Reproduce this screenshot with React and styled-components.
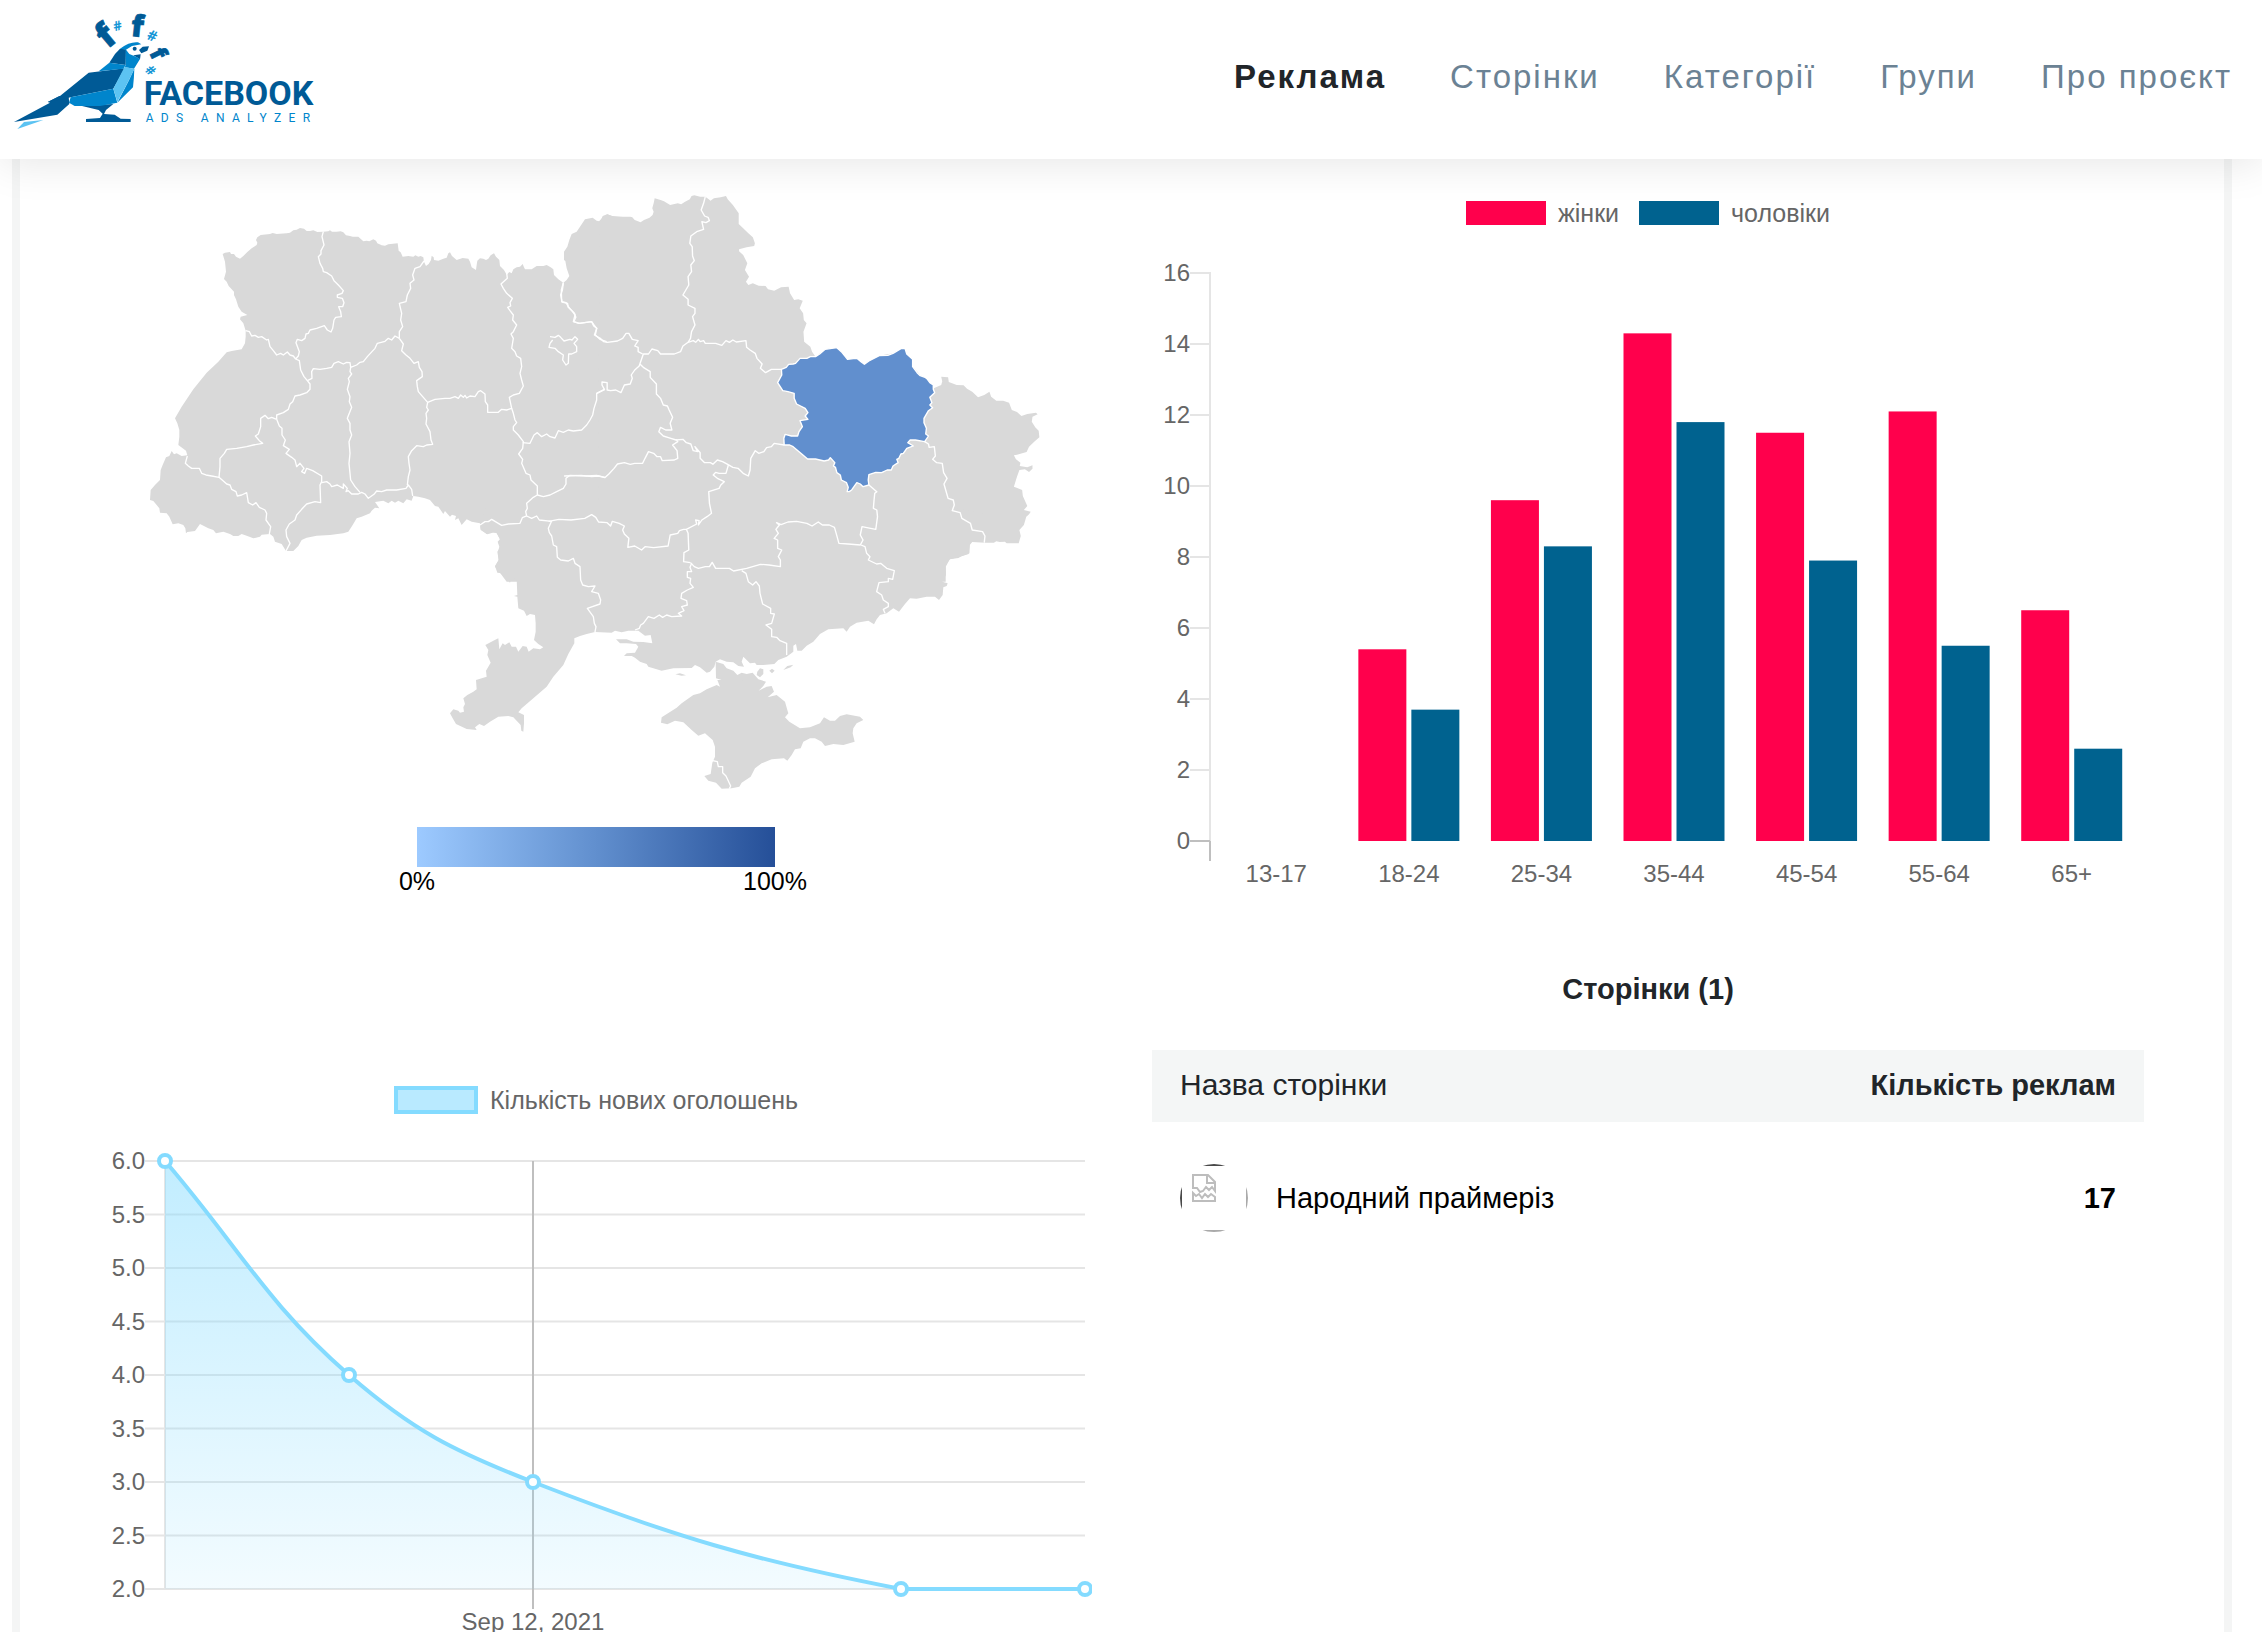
import React from "react";
import styled, { createGlobalStyle } from "styled-components";

const navItems = [
  { label: "Реклама", active: true },
  { label: "Сторінки" },
  { label: "Категорії" },
  { label: "Групи" },
  { label: "Про проєкт" },
];

const pages = [{ name: "Народний праймеріз", count: 17 }];

const ages = [
  { label: "13-17", women: 0, men: 0 },
  { label: "18-24", women: 5.4, men: 3.7 },
  { label: "25-34", women: 9.6, men: 8.3 },
  { label: "35-44", women: 14.3, men: 11.8 },
  { label: "45-54", women: 11.5, men: 7.9 },
  { label: "55-64", women: 12.1, men: 5.5 },
  { label: "65+", women: 6.5, men: 2.6 },
];

const newAds = [
  { day: 0, value: 6 },
  { day: 1, value: 4 },
  { day: 2, value: 3 },
  { day: 4, value: 2 },
  { day: 5, value: 2 },
];

// Outlines are kept per map sheet, each sheet has its own origin and scale
const sheets = [
  {
    id: "west",
    transform: "translate(30 0) scale(0.33333)",
    areas: [
      "278,222 285,218 300,216 303,222 312,222 318,230 330,236 340,228 352,216 365,205 380,195 382,188 378,180 382,172 392,165 420,162 428,159 440,162 470,160 480,158 490,151 500,149 510,144 522,146 530,153 540,153 550,151 562,156 580,155 595,154 600,151 606,155 620,155 632,154 640,157 648,166 660,168 668,170 685,170 700,184 710,182 718,184 730,178 738,182 742,190 755,196 765,197 775,193 803,190 806,212 812,217 818,230 835,228 850,230 856,226 865,230 872,228 880,232 882,245 888,258 896,252 900,245 903,240 905,227 911,232 912,240 925,242 940,236 950,233 955,220 960,217 966,228 980,240 998,234 1015,236 1020,245 1025,262 1038,270 1040,255 1042,242 1050,235 1060,236 1068,240 1075,236 1082,226 1092,220 1098,230 1106,238 1108,240 1110,258 1122,270 1130,284 1138,276 1145,280 1150,268 1160,262 1170,260 1178,252 1182,262 1185,268 1205,268 1220,258 1240,258 1250,255 1262,262 1270,268 1272,285 1285,298 1300,308 1310,300 1318,288 1310,265 1306,243 1302,240 1302,215 1312,200 1318,180 1325,162 1340,155 1350,140 1365,118 1388,113 1400,122 1408,124 1418,112 1432,103 1455,112 1455,1205 1130,1205 1115,1185 1095,1160 1106,1140 1104,1115 1108,1100 1103,1085 1110,1078 1100,1060 1090,1056 1070,1062 1052,1048 1050,1030 1025,1025 1010,1018 995,1035 985,1015 975,1020 978,1008 966,1004 960,1010 945,993 940,1002 925,980 915,978 900,960 885,955 865,950 850,948 845,962 830,958 820,970 805,962 795,968 785,962 775,970 760,962 735,966 748,985 735,983 725,992 720,1000 695,1010 680,1015 668,1035 655,1055 640,1060 600,1065 560,1067 530,1073 515,1080 505,1098 490,1113 468,1113 455,1092 435,1085 430,1070 420,1062 395,1064 390,1070 370,1075 350,1067 335,1062 325,1068 310,1068 300,1062 280,1055 258,1060 250,1050 235,1045 210,1032 195,1053 172,1056 168,1060 166,1045 160,1035 145,1030 128,1033 118,1010 110,1000 90,998 88,985 80,975 70,963 60,960 62,930 75,915 90,900 92,870 98,855 108,832 118,828 125,813 132,823 140,820 155,828 172,826 168,812 145,795 148,770 148,750 142,730 135,715 155,680 190,628 230,578 265,545 290,517 305,513 335,508 345,490 347,470 347,452 340,430 330,418 332,410 352,405 335,395 325,380 318,358 312,345 312,335 296,318 290,305 282,297 288,275 285,245",
    ],
    borders: [
      "580,155 576,170 582,195 573,212 573,222 565,230 570,250 578,265 580,275 590,278 605,288 612,302 625,315 640,332 636,340 622,345 622,352 637,355 642,368 638,380 626,380 632,395 634,410 617,412 612,420 608,445 603,456 592,450 583,437 560,445 540,450 535,460 528,462 525,475 515,482 502,478 498,488 508,515 505,528 497,537",
      "347,452 358,455 365,468 375,466 385,472 395,470 410,480 415,478 420,500 430,512 440,525 452,520 460,525 472,516 480,525 490,528 497,537 508,542 512,570 522,590 532,602 540,612 540,628 530,638 510,645 495,648 488,665 480,672 475,688 460,698 440,705 440,718",
      "532,602 546,595 545,575 550,566 570,568 590,565 605,562 612,550 625,545 640,552 650,547 660,548 662,562 680,555 690,547 700,545 712,530 735,505 742,490 765,484 775,475 785,480 795,468 808,475",
      "808,475 808,455 818,440 812,420 815,400 808,370 828,365 832,345 842,325 840,310 852,300 848,285 855,265 870,260 882,243",
      "808,475 820,492 815,512 828,525 840,535 852,550 865,545 868,562 876,575 877,590 860,602 862,620 865,635 878,650 893,667 915,658 945,655 960,655 975,650 985,655 992,645 1000,652 1005,646 1010,654 1020,648 1035,650 1045,635 1052,632 1065,642 1066,665 1073,675 1073,697 1105,697 1115,688 1130,690 1145,685",
      "1130,278 1132,295 1113,312 1120,325 1130,340 1147,355 1140,368 1142,378 1133,382 1140,392 1150,405 1148,420 1160,435 1150,455 1143,462 1150,475 1145,505 1155,515 1160,528 1172,535 1175,560 1170,580 1175,600 1180,618 1168,640 1150,645 1138,652 1145,685 1150,700 1155,720 1160,728 1150,740 1150,750 1165,765 1180,785 1178,805 1166,822 1178,838 1175,850 1188,880 1200,885 1203,900 1222,918 1222,945 1210,952 1190,970 1192,985 1187,995 1190,1008",
      "440,718 425,712 415,716 405,706 392,715 392,740 385,762 376,768 388,782 398,790 370,795 350,800 320,805 290,808 283,820 270,835 270,860 267,892",
      "172,828 166,850 175,858 185,865 208,865 215,880 228,885 245,888 267,892 280,903 290,912 300,915 305,928 318,935 322,948 335,945 350,938 355,968 368,975 378,968 388,982 405,990 410,1000 408,1020 422,1040 418,1062",
      "440,718 448,738 456,745 456,765 466,780 460,797 478,808 468,820 485,832 495,840 500,860 510,850 522,865 515,875 524,880 530,865 548,872 575,888 575,905 570,915 572,968 555,965 530,972 515,988 500,1005 495,1020 478,1032 468,1050 470,1070 480,1090 468,1113",
      "575,908 590,905 600,912 605,920 622,915 640,925 640,912 652,925 648,935 655,932 665,942 685,942 695,937 705,942 715,955 732,943 740,933 755,935 770,930 800,930 828,925 835,915 845,928 848,948",
      "662,562 660,575 665,582 655,595 658,605 652,628 660,650 658,665 665,682 652,715 660,730 660,750 665,765 657,785 660,820 657,850 662,900 675,920 690,937",
      "893,667 890,682 895,690 888,700 890,715 888,732 900,755 903,780 908,793 890,795 880,800 860,797 845,812 835,830 837,850 840,870 835,890 832,915",
      "1178,788 1200,790 1212,765 1222,758 1235,770 1250,762 1260,770 1275,774 1285,752 1300,757 1315,750 1330,753 1355,750 1370,735 1380,720 1388,705 1392,685 1400,660 1400,640 1425,628",
      "1222,945 1240,950 1260,945 1280,935 1300,925 1308,912 1308,895 1320,886 1370,888 1400,886 1425,892",
      "1050,1035 1065,1025 1075,1025 1085,1018 1100,1027 1115,1036 1135,1032 1170,1030 1177,1013 1190,1008 1205,1015 1220,1008 1228,1020 1265,1024",
      "1260,470 1275,472 1285,466 1292,472 1302,483 1320,478 1326,480 1335,470 1343,478 1332,490 1340,500 1340,515 1325,522 1316,522 1315,550 1308,555 1298,540 1300,525 1285,515 1275,505 1257,502 1260,490 1268,480",
      "1300,308 1294,330 1295,365 1308,368 1315,380 1328,395 1335,405 1330,425 1350,430 1385,425 1392,435 1400,445 1396,465 1410,478 1430,485",
    ],
  },
  {
    id: "east",
    transform: "translate(440 0) scale(0.34439 0.33333)",
    areas: [
      "172,124 178,118 182,108 195,103 210,108 240,110 262,110 268,112 275,120 292,127 302,120 318,113 327,105 330,95 326,85 330,70 333,55 350,60 360,64 378,75 400,70 410,73 420,66 435,58 440,48 448,46 465,50 480,50 490,58 495,62 505,55 525,52 540,48 545,58 560,75 577,100 577,132 590,145 605,160 618,172 624,190 622,198 600,202 578,208 578,214 590,225 602,250 595,270 607,290 598,305 605,315 618,310 635,317 655,318 662,328 680,332 700,322 722,320 726,340 738,360 750,358 763,362 754,385 764,400 766,420 774,430 765,455 767,485 785,500 790,515 800,530 828,508 862,503 893,538 942,553 985,527 1025,520 1048,506 1060,506 1065,522 1082,540 1083,560 1104,585 1125,598 1143,625 1165,615 1168,604 1165,590 1185,592 1187,606 1210,615 1230,616 1240,626 1255,635 1272,652 1290,645 1305,635 1310,650 1325,662 1345,662 1362,668 1370,690 1385,696 1398,708 1415,702 1440,698 1445,703 1430,710 1428,725 1438,742 1448,752 1450,772 1435,785 1420,800 1413,816 1385,824 1376,826 1382,838 1395,848 1393,858 1415,862 1430,856 1430,866 1420,876 1408,868 1392,870 1385,890 1376,920 1400,930 1402,948 1415,978 1405,990 1425,995 1420,1003 1412,1010 1405,1035 1392,1050 1396,1068 1390,1090 1355,1090 1350,1085 1335,1086 1325,1084 1318,1088 1292,1088 1255,1086 1248,1095 1247,1120 1225,1128 1215,1134 1190,1138 1178,1160 1178,1205 170,1205",
    ],
    accent:
      "701,568 715,562 722,553 735,552 742,550 755,535 775,535 785,530 800,530 812,522 828,508 862,503 875,515 893,538 910,536 920,535 932,545 942,553 955,543 985,527 1010,526 1025,520 1048,506 1060,506 1065,522 1082,538 1082,560 1095,578 1104,587 1118,592 1125,598 1132,608 1142,615 1142,628 1146,638 1132,652 1138,668 1132,675 1140,683 1128,692 1115,715 1115,728 1122,745 1120,762 1128,768 1117,785 1090,780 1075,780 1068,788 1084,798 1065,805 1055,820 1048,822 1042,835 1036,838 1040,848 1025,858 1020,870 1008,870 992,878 975,877 955,884 953,900 955,915 938,920 930,912 920,908 905,930 898,935 892,935 895,922 890,908 875,900 872,885 862,878 858,862 852,858 856,848 843,833 838,840 825,843 800,837 777,837 760,822 735,800 725,795 709,795 708,775 712,763 730,768 748,768 752,755 762,740 755,722 778,718 770,708 778,698 770,685 745,672 738,655 738,640 720,635 705,632 690,608 702,585",
    borders: [
      "480,50 475,70 468,90 478,108 488,112 492,122 482,128 470,125 475,148 455,155 438,168 435,190 442,200 443,228 448,242 438,255 440,275 430,290 432,315 415,345 430,358 430,375 450,385 450,400 443,410 450,435 440,455 437,475 430,487",
      "430,487 445,482 452,487 460,478 465,485 475,482 480,490 510,490 528,496 540,482 550,487 560,480 570,486 598,482 600,502 610,510 625,520 630,535 645,552 640,565 655,578 672,568 701,568",
      "430,487 415,498 408,515 390,522 350,522 342,512 325,507 315,522 300,522 290,552 300,562 320,575 320,592 338,612 338,642 350,655 358,675 370,678 375,690 385,712 378,730 383,750 365,750 350,742 345,755 358,768 380,775 395,780 415,778 425,788 438,792 445,812 458,815 450,800 465,818 465,835 478,848 495,848 502,853 515,840 530,845 545,853 560,862 575,865 590,880 605,888 610,870 612,835 625,812 635,820 650,815 658,803 672,800 680,790 709,795",
      "68,308 65,330 60,345 64,366 80,370 82,382 100,400 104,412 98,425 112,430 150,425 156,438 165,445 158,465 175,475 185,485 195,487 225,483 240,475 250,460 258,460 268,478 285,482 275,498 285,502 285,515 298,522",
      "187,628 180,615 180,606 195,608 195,630 205,632 220,630 235,638 245,615 262,612 268,595 265,585 275,570 288,558 290,552",
      "165,640 187,628",
      "70,888 120,886 150,890 170,888 188,893 200,882 215,865 225,852 245,848 262,853 275,850 298,850 305,835 315,815 330,820 340,830 350,830 355,842 390,840 400,835 398,812 385,795 400,785 395,778",
      "547,855 540,880 520,880 510,877 503,885 515,895 535,905 525,915 520,925 490,935 492,970 498,1000 485,1010 470,1020 460,1035 462,1022 452,1020 455,1032 425,1048 430,1060 432,1110 418,1118 417,1145 437,1148",
      "25,1024 55,1018 90,1020 130,1015 150,1004 162,1012 170,1026 195,1028 205,1038 210,1024 230,1030 245,1038 240,1050 245,1062 258,1075 255,1102 275,1098 295,1110 305,1100 330,1103 372,1098 378,1065 400,1060 405,1052 417,1048 425,1048",
      "1117,785 1128,792 1130,802 1145,800 1148,828 1140,838 1152,848 1168,850 1172,878 1182,895 1173,912 1178,930 1185,955 1200,960 1203,975 1197,992 1220,998 1225,1015 1250,1030 1255,1050 1285,1055 1292,1068 1290,1088",
      "437,1148 448,1160 460,1165 480,1160 492,1160 500,1147 510,1165 550,1165 562,1173 600,1165 640,1153 665,1155 698,1160 698,1140 692,1130 702,1110 690,1105 690,1080 680,1075 692,1060 685,1048 695,1035 687,1028 700,1034 720,1026 745,1024 775,1030 790,1038 808,1026 820,1035 840,1035 855,1042 860,1060 868,1090 895,1092 930,1095 938,1080 930,1065 935,1040 960,1045 975,1048 980,1010 978,990 968,985 970,960 972,940 978,935 955,915",
    ],
  },
  {
    id: "south",
    transform: "translate(280 300) scale(0.33333)",
    areas: [
      "320,80 1697,80 1810,100 1810,185 1770,185 1766,222 1735,232 1710,237 1697,255 1698,285 1687,305 1703,310 1700,318 1690,322 1688,345 1677,360 1665,350 1640,350 1610,356 1590,355 1575,372 1557,395 1540,385 1520,400 1500,405 1490,418 1482,433 1465,422 1430,428 1410,440 1400,455 1390,445 1345,448 1320,462 1300,485 1280,497 1265,512 1252,512 1248,492 1240,497 1240,515 1220,530 1195,540 1183,552 1150,555 1130,555 1125,548 1110,550 1090,530 1085,545 1092,560 1075,558 1060,547 1040,545 1020,538 1007,545 1003,560 990,575 980,578 960,562 945,555 935,564 880,565 845,572 805,560 800,552 780,545 765,533 755,528 732,528 740,520 765,518 775,500 768,492 740,490 720,490 708,478 740,478 760,485 790,486 817,490 812,465 795,467 775,452 745,452 725,457 705,452 695,458 645,456 620,462 600,468 583,475 583,490 565,522 550,555 520,590 500,620 460,655 425,685 415,697 432,705 432,730 430,755 424,752 422,735 400,712 385,708 355,710 330,725 312,738 298,732 285,742 290,750 260,747 228,732 218,715 210,700 220,688 235,692 240,698 252,695 250,682 255,672 250,655 262,645 280,635 290,628 288,600 320,590 318,572 332,548 322,525 325,510 316,495 340,482 355,475 358,508 368,490 375,495 388,487 395,500 408,500 415,515 428,498 440,500 446,515 460,505 480,508 490,502 475,492 462,480 467,455 467,430 465,405 450,402 440,408 432,392 415,385 412,350 402,348 412,345 410,298 395,295 390,308 375,290 365,280 352,278 345,258 356,240 352,215 362,200 355,188 360,178 350,158 338,158 322,163 302,150 300,130",
      "1007,545 1030,552 1040,565 1060,572 1072,585 1085,578 1100,582 1118,578 1135,598 1158,605 1150,618 1136,632 1160,620 1175,618 1182,635 1163,652 1190,645 1215,665 1222,690 1225,700 1215,712 1228,725 1260,745 1290,742 1320,730 1332,712 1350,722 1365,722 1380,708 1400,703 1440,710 1450,720 1430,730 1420,745 1418,760 1424,785 1390,795 1360,792 1335,798 1325,785 1305,775 1290,775 1270,785 1262,805 1245,808 1235,825 1222,842 1212,835 1175,838 1145,850 1125,865 1112,890 1085,908 1078,920 1055,925 1025,926 1008,908 985,902 973,888 992,882 997,848 1005,830 1005,800 998,780 975,760 955,767 935,750 910,727 885,722 862,733 843,728 845,712 890,683 905,670 940,645 960,640 980,628 1010,615 1020,620 1012,600 1025,600 1008,595",
      "1132,575 1140,565 1150,568 1150,582 1140,592 1130,585",
      "1168,572 1176,566 1184,572 1176,580",
      "1210,570 1222,558 1240,554 1232,562",
      "886,583 900,580 918,586 905,587",
      "1085,580 1092,595 1085,602 1078,598",
    ],
    borders: [
      "515,123 505,145 508,158 515,168 520,195 530,200 532,232 542,240 565,243 580,235 585,250 600,260 602,300 608,315 625,320 645,318 635,335 655,340 662,360 660,372 622,385 640,410 643,430 648,440 645,456",
      "935,250 930,262 935,275 922,275 922,292 932,295 930,310 940,322 922,330 905,340 903,355 920,362 922,375 905,380 912,392 895,400 905,408 875,410 860,405 848,412 838,405 822,415 805,410 790,430 782,435 778,445 765,450",
      "1085,272 1098,280 1105,305 1118,315 1128,305 1138,318 1140,340 1148,372 1172,385 1172,400 1183,402 1175,430 1158,435 1175,448 1175,470 1190,472 1200,482 1220,490 1220,525",
      "1443,195 1455,200 1460,220 1470,230 1465,240 1490,252 1502,250 1520,265 1543,272 1538,298 1525,295 1525,305 1497,308 1490,335 1505,345 1510,360 1525,370 1525,380 1510,388 1515,400",
      "998,842 1012,845 1015,860 1028,860 1028,878 1038,888 1052,918 1048,926",
    ],
  },
];

const MEN = "#00628f";
const WOMEN = "#ff004c";
const LINE = "#84dbff";

function Logo() {
  return (
    <svg width="304" height="120" viewBox="36 30 912 360" role="img" aria-label="Facebook Ads Analyzer">
      <g fill="#005a96">
        <polygon points="206,290 208,312 172,344 42,366 150,308 143,306 178,288" />
        <polygon points="266,218 374,205 340,266 212,292 165,302 143,306 180,288" />
        <polygon points="360,146 378,148 377,195 328,188 345,162" />
        <path d="M246 318L340 312L318 330L312 342L344 344L362 356L392 357V366H258V357L300 354L308 341L296 330Z" />
        <polygon points="417,150 428,140 447,139 442,152 424,160" />
        <polygon points="400,166 422,163 420,178" />
        <circle cx="404" cy="146" r="6" />
      </g>
      <g fill="#0085cc">
        <polygon points="328,188 377,195 370,206 296,214" />
        <path d="M377 148L388 162L408 170L420 177L402 206L374 202L377 195Z" />
        <path d="M360 146Q390 124 414 127L424 133L396 138L378 149Z" />
        <polygon points="212,292 340,266 352,308 300,318 224,318 207,308" />
        <path d="M403 206Q402 236 399 262L352 308L386 242Z" />
      </g>
      <g fill="#5cc3f2">
        <polygon points="374,200 403,207 386,242 352,306 340,266" />
        <polygon points="72,366 130,360 52,387" />
      </g>
      <FaceMark fontSize="104" transform="translate(323 148) rotate(-40)">f</FaceMark>
      <FaceMark fontSize="90" transform="translate(391 108) rotate(6)">f</FaceMark>
      <FaceMark fontSize="70" transform="translate(447 158) rotate(64)">f</FaceMark>
      <HashMark fontSize="40" transform="translate(343 94) rotate(-12)">#</HashMark>
      <HashMark fontSize="44" transform="translate(438 116) rotate(22)">#</HashMark>
      <HashMark fontSize="40" transform="translate(433 212) rotate(44)">#</HashMark>
      <LogoName x="431" y="315">FACEBOOK</LogoName>
      <LogoTagline x="437" y="365">ADS ANALYZER</LogoTagline>
    </svg>
  );
}

function UkraineMap() {
  return (
    <ChartSvg viewBox="0 0 992 640" role="img" aria-label="Карта України">
      {sheets.map((sheet) => (
        <g key={sheet.id} transform={sheet.transform} fill="#d9d9d9">
          {sheet.areas.map((points) => (
            <polygon key={points} points={points} />
          ))}
        </g>
      ))}
      {sheets.map((sheet) => (
        <g key={sheet.id} transform={sheet.transform}>
          {sheet.borders.map((points) => (
            <RegionBorder key={points} points={points} />
          ))}
          {sheet.accent && <ActiveRegion points={sheet.accent} />}
        </g>
      ))}
    </ChartSvg>
  );
}

function AgeChart() {
  const left = 58;
  const zero = 616;
  const unit = 35.5;
  const slot = 928 / ages.length;
  const ticks = [0, 2, 4, 6, 8, 10, 12, 14, 16];

  return (
    <ChartSvg viewBox="0 0 992 680" role="img" aria-label="Вік і стать">
      <line x1={left} x2={left} y1={zero - 16 * unit - 1} y2={zero} stroke="#e5e5e5" strokeWidth="2" />
      <line x1={left} x2={left} y1={zero} y2={zero + 20} stroke="#bfbfbf" strokeWidth="2" />
      {ticks.map((tick) => (
        <g key={tick}>
          <line
            x1={left - 20}
            x2={left}
            y1={zero - tick * unit}
            y2={zero - tick * unit}
            stroke={tick === 0 ? "#bfbfbf" : "#e5e5e5"}
            strokeWidth="2"
          />
          <AxisText x={left - 20} y={zero - tick * unit + 8} textAnchor="end">
            {tick}
          </AxisText>
        </g>
      ))}
      {ages.map((age, i) => {
        const middle = left + slot * (i + 0.5);
        return (
          <g key={age.label}>
            <rect x={middle - 50.5} width="48" y={zero - age.women * unit} height={age.women * unit} fill={WOMEN} />
            <rect x={middle + 2.5} width="48" y={zero - age.men * unit} height={age.men * unit} fill={MEN} />
            <AxisText x={middle} y={zero + 41} textAnchor="middle">
              {age.label}
            </AxisText>
          </g>
        );
      })}
    </ChartSvg>
  );
}

// Smooth path through the points, with handles clamped to the plot area
function curve(points, top, bottom) {
  const clamp = (y) => Math.min(Math.max(y, top), bottom);
  const handles = points.map((p, i) => {
    const prev = points[i - 1] || p;
    const next = points[i + 1] || p;
    const d1 = Math.hypot(p.x - prev.x, p.y - prev.y);
    const d2 = Math.hypot(next.x - p.x, next.y - p.y);
    const a = (0.4 * d1) / (d1 + d2);
    const b = (0.4 * d2) / (d1 + d2);
    return {
      before: [p.x - a * (next.x - prev.x), clamp(p.y - a * (next.y - prev.y))],
      after: [p.x + b * (next.x - prev.x), clamp(p.y + b * (next.y - prev.y))],
    };
  });
  return points
    .map((p, i) => (i === 0 ? `M${p.x},${p.y}` : `C${handles[i - 1].after} ${handles[i].before} ${p.x},${p.y}`))
    .join(" ");
}

function NewAdsChart() {
  const left = 65;
  const right = 985;
  const top = 47;
  const bottom = 475;
  const ticks = [6, 5.5, 5, 4.5, 4, 3.5, 3, 2.5, 2];
  const yOf = (value) => bottom - ((value - 2) / 4) * (bottom - top);
  const points = newAds.map((d) => ({ x: left + (d.day / 5) * (right - left), y: yOf(d.value) }));
  const line = curve(points, top, bottom);

  return (
    <ChartSvg viewBox="0 0 992 540" role="img" aria-label="Кількість нових оголошень">
      <defs>
        <linearGradient id="adsFill" x1="0" y1="0" x2="0" y2="1">
          <stop offset="0" stopColor={LINE} stopOpacity="0.5" />
          <stop offset="1" stopColor={LINE} stopOpacity="0.1" />
        </linearGradient>
      </defs>
      {ticks.map((tick) => (
        <g key={tick}>
          <line x1={left - 20} x2={right} y1={yOf(tick)} y2={yOf(tick)} stroke="#e5e5e5" strokeWidth="2" />
          <AxisText x={left - 20} y={yOf(tick) + 8} textAnchor="end">
            {tick.toFixed(1)}
          </AxisText>
        </g>
      ))}
      <line x1={left} x2={left} y1={top} y2={bottom} stroke="#e5e5e5" strokeWidth="2" />
      <line x1={points[2].x} x2={points[2].x} y1={top} y2={bottom + 20} stroke="#bfbfbf" strokeWidth="2" />
      <path d={`${line} L${right},${bottom} L${left},${bottom} Z`} fill="url(#adsFill)" />
      <path d={line} fill="none" stroke={LINE} strokeWidth="4" />
      {points.map((p) => (
        <circle key={p.x} cx={p.x} cy={p.y} r="6" fill="#fff" stroke={LINE} strokeWidth="4" />
      ))}
      <AxisText x={points[2].x} y={bottom + 41} textAnchor="middle">
        Sep 12, 2021
      </AxisText>
    </ChartSvg>
  );
}

function BrokenImage() {
  return (
    <svg width="24" height="28" viewBox="0 0 24 28" fill="none" stroke="#bdbdbd" strokeWidth="2">
      <path d="M1 14V1H16L23 8V17L20 13L17 16L14 13L11 17L8 18L5 14Z" />
      <path d="M15 1V9H23" />
      <path d="M1 27V19L4 22L7 20L10 24L13 20L16 23L19 20L23 23V27Z" />
    </svg>
  );
}

export default function App() {
  return (
    <Page>
      <GlobalStyle />
      <Header>
        <LogoLink href="#">
          <Logo />
        </LogoLink>
        <Nav>
          {navItems.map((item) => (
            <NavLink key={item.label} href="#" $active={item.active}>
              {item.label}
            </NavLink>
          ))}
        </Nav>
      </Header>
      <Content>
        <Column>
          <UkraineMap />
          <MapScale>
            <ScaleBar />
            <ScaleLabels>
              <ScaleLabel>0%</ScaleLabel>
              <ScaleLabel>100%</ScaleLabel>
            </ScaleLabels>
          </MapScale>
          <Legend>
            <LegendItem>
              <Swatch $color="#b9eaff" $border={LINE} />
              Кількість нових оголошень
            </LegendItem>
          </Legend>
          <NewAdsChart />
        </Column>
        <Column $top={21}>
          <Legend>
            <LegendItem>
              <Swatch $color={WOMEN} />
              жінки
            </LegendItem>
            <LegendItem>
              <Swatch $color={MEN} />
              чоловіки
            </LegendItem>
          </Legend>
          <AgeChart />
          <Heading>Сторінки (1)</Heading>
          <Table>
            <thead>
              <tr>
                <HeadCell>Назва сторінки</HeadCell>
                <HeadCell $number>Кількість реклам</HeadCell>
              </tr>
            </thead>
            <tbody>
              {pages.map((page) => (
                <tr key={page.name}>
                  <Cell>
                    <PageLink href="#">
                      <Avatar>
                        <AvatarFrame>
                          <BrokenImage />
                        </AvatarFrame>
                      </Avatar>
                      {page.name}
                    </PageLink>
                  </Cell>
                  <Cell $number>{page.count}</Cell>
                </tr>
              ))}
            </tbody>
          </Table>
        </Column>
      </Content>
    </Page>
  );
}

const GlobalStyle = createGlobalStyle`
  * {
    box-sizing: border-box;
  }

  body {
    margin: 0;
    background: #fff;
    color: #212529;
    font-family: "Liberation Sans", Arial, sans-serif;
  }
`;

const Page = styled.div`
  height: 100vh;
  display: flex;
  flex-direction: column;
  overflow: hidden;
`;

const Header = styled.header`
  position: relative;
  z-index: 1;
  flex: none;
  display: flex;
  align-items: flex-start;
  justify-content: space-between;
  height: 159px;
  padding: 10px 30px 0 12px;
  background: #fff;
  box-shadow: 0 4px 40px rgba(0, 0, 0, 0.1);
`;

const LogoLink = styled.a`
  display: block;

  svg {
    display: block;
    overflow: visible;
  }
`;

const FaceMark = styled.text`
  fill: #005a96;
  stroke: #005a96;
  stroke-width: 2;
  font-family: "Open Sans", sans-serif;
  font-weight: 800;
`;

const HashMark = styled.text`
  fill: #1496d6;
  font-family: "Open Sans", sans-serif;
  font-weight: 700;
`;

const LogoName = styled.text`
  fill: #005a96;
  font: 700 102px Roboto, sans-serif;
`;

const LogoTagline = styled.text`
  fill: #0085cc;
  font: 400 36px Roboto, sans-serif;
  letter-spacing: 22px;
`;

const Nav = styled.nav`
  display: flex;
  gap: 64px;
  padding-top: 47px;
`;

const NavLink = styled.a`
  color: ${(p) => (p.$active ? "#212529" : "#6b8294")};
  font-size: 33px;
  font-weight: ${(p) => (p.$active ? 700 : 400)};
  line-height: 40px;
  letter-spacing: 2px;
  text-decoration: none;
`;

const Content = styled.main`
  flex: 1;
  min-height: 0;
  display: grid;
  grid-template-columns: 1fr 1fr;
  align-items: start;
  gap: 60px;
  margin: 0 30px 0 12px;
  padding: 21px 80px 0;
  border: solid #f4f5f5;
  border-width: 0 8px;
`;

const Column = styled.section`
  min-width: 0;
  padding-top: ${(p) => p.$top || 0}px;
`;

const ChartSvg = styled.svg`
  display: block;
  width: 100%;
  height: auto;
`;

const RegionBorder = styled.polyline`
  fill: none;
  stroke: #fff;
  stroke-width: 4;
  stroke-linejoin: round;
`;

const ActiveRegion = styled.polygon`
  fill: #618fce;
  stroke: #fff;
  stroke-width: 4;
  stroke-linejoin: round;
`;

const AxisText = styled.text`
  fill: #666;
  font-size: 24px;
`;

const MapScale = styled.div`
  width: 358px;
  margin: 7px auto 191px;
`;

const ScaleBar = styled.div`
  height: 40px;
  background: linear-gradient(to right, #9dcaff, #618fce 50%, #254f98);
`;

const ScaleLabels = styled.div`
  display: flex;
  justify-content: space-between;
  margin: 0 -40px;
`;

const ScaleLabel = styled.span`
  width: 80px;
  color: #000;
  font-size: 25px;
  line-height: 28px;
  text-align: center;
`;

const Legend = styled.div`
  display: flex;
  justify-content: center;
  gap: 20px;
`;

const LegendItem = styled.span`
  display: flex;
  align-items: center;
  gap: 12px;
  color: #666;
  font-size: 25px;
  line-height: 24px;
`;

const Swatch = styled.span`
  width: ${(p) => (p.$border ? 84 : 80)}px;
  height: ${(p) => (p.$border ? 28 : 24)}px;
  background: ${(p) => p.$color};
  border: ${(p) => (p.$border ? `4px solid ${p.$border}` : "none")};
`;

const Heading = styled.h2`
  margin: 64px 0 41px;
  font-size: 29px;
  line-height: 40px;
  text-align: center;
`;

const Table = styled.table`
  width: 100%;
  border-collapse: collapse;
`;

const HeadCell = styled.th`
  height: 72px;
  padding: 0 28px 2px;
  background: #f4f6f6;
  font-size: ${(p) => (p.$number ? 29 : 30)}px;
  font-weight: ${(p) => (p.$number ? 700 : 400)};
  text-align: ${(p) => (p.$number ? "right" : "left")};
`;

const Cell = styled.td`
  height: 152px;
  padding: 0 28px;
  color: #000;
  font-size: 29px;
  font-weight: ${(p) => (p.$number ? 700 : 400)};
  text-align: ${(p) => (p.$number ? "right" : "left")};
`;

const PageLink = styled.a`
  display: flex;
  align-items: center;
  gap: 28px;
  color: inherit;
  text-decoration: none;
`;

const Avatar = styled.span`
  display: block;
  width: 68px;
  height: 68px;
  border-radius: 50%;
  overflow: hidden;
`;

const AvatarFrame = styled.span`
  display: block;
  height: 100%;
  padding: 8px 10px;
  border: 2px solid;
  border-color: #4a4a4a #aaa #aaa #4a4a4a;

  svg {
    display: block;
  }
`;
